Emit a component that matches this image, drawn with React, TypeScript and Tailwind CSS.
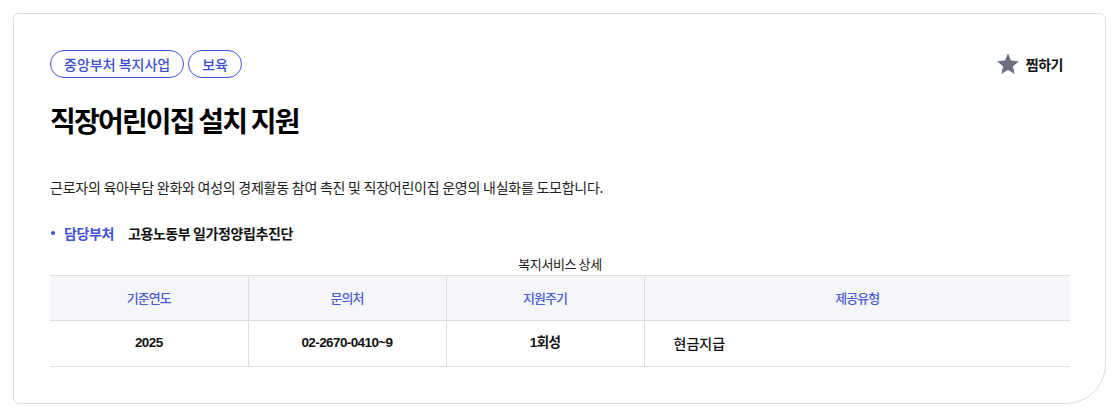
import React from 'react'

const FONT = { fontFamily: '"Noto Sans CJK KR", "Noto Sans", sans-serif' }
const NUM_FONT = { fontFamily: '"Liberation Sans", "Noto Sans CJK KR", sans-serif' }

const tags = ['중앙부처 복지사업', '보육']

const headers = ['기준연도', '문의처', '지원주기', '제공유형']

const StarIcon: React.FC = () => (
  <svg width="24" height="24" viewBox="0 0 24 24" aria-hidden="true">
    <path
      d="M12 1.5l3.1 7.1 7.7.7-5.8 5.1 1.7 7.6L12 18.1 5.3 22l1.7-7.6-5.8-5.1 7.7-.7z"
      fill="#6b6e80"
    />
  </svg>
)

export default function App() {
  return (
    <div className="bg-white w-[1118px] h-[417px] p-[13px]" style={FONT}>
      <div className="w-[1093px] h-[391px] border border-[#dcdcdc] rounded-tl-[6px] rounded-tr-[6px] rounded-bl-[6px] rounded-br-[40px] px-[36px] pt-[36px]">
        <div className="flex items-start justify-between">
          <div className="flex gap-[4px]">
            {tags.map((t) => (
              <span
                key={t}
                className="h-[28px] px-[13px] rounded-full border border-[#3d54d8] text-[#3b4fd0] text-[14px] font-medium leading-[26px] flex items-center"
              >
                {t}
              </span>
            ))}
          </div>
          <button className="flex items-center gap-[6px] mt-[2px] mr-[6px]">
            <StarIcon />
            <span className="text-[14px] font-bold text-[#111] tracking-[-0.5px]">찜하기</span>
          </button>
        </div>

        <h1 className="mt-[24px] text-[28px] font-bold text-black leading-[36px] tracking-[-1.8px]">
          직장어린이집 설치 지원
        </h1>

        <p className="mt-[38px] text-[14px] text-[#222] leading-[22px] tracking-[-0.25px]">
          근로자의 육아부담 완화와 여성의 경제활동 참여 촉진 및 직장어린이집 운영의 내실화를 도모합니다.
        </p>

        <div className="mt-[25px] flex items-center text-[14px] leading-[20px] tracking-[-0.4px]">
          <span className="w-[4px] h-[4px] rounded-full bg-[#3d54d8] ml-[1px] mr-[9px]" />
          <span className="font-bold text-[#3d54d8]">담당부처</span>
          <span className="font-bold text-[#111] ml-[14px]">고용노동부 일가정양립추진단</span>
        </div>

        <table className="mt-[11px] w-[1020px] border-collapse table-fixed">
          <caption className="text-[13px] text-[#222] leading-[20px] pb-[1px] tracking-[-0.4px]">
            복지서비스 상세
          </caption>
          <colgroup>
            <col className="w-[198px]" />
            <col className="w-[198px]" />
            <col className="w-[198px]" />
            <col />
          </colgroup>
          <thead>
            <tr className="bg-[#f5f6fa] border-t border-b border-[#dddddd] h-[45px]">
              {headers.map((h, i) => (
                <th
                  key={h}
                  className={
                    'text-[13px] font-medium text-[#4a5bd8] text-center tracking-[-1px] ' +
                    (i > 0 ? 'border-l border-[#dddddd]' : '')
                  }
                >
                  {h}
                </th>
              ))}
            </tr>
          </thead>
          <tbody>
            <tr className="border-b border-[#dddddd] h-[46px] text-[13.5px] text-[#111]" style={NUM_FONT}>
              <td className="text-center font-bold tracking-[-0.6px]">2025</td>
              <td className="text-center font-bold tracking-[-0.6px] border-l border-[#dddddd]">
                02-2670-0410~9
              </td>
              <td className="text-center font-bold tracking-[-0.6px] border-l border-[#dddddd]">1회성</td>
              <td className="pl-[29px] border-l border-[#dddddd] font-medium text-[14px]" style={FONT}>
                현금지급
              </td>
            </tr>
          </tbody>
        </table>
      </div>
    </div>
  )
}
